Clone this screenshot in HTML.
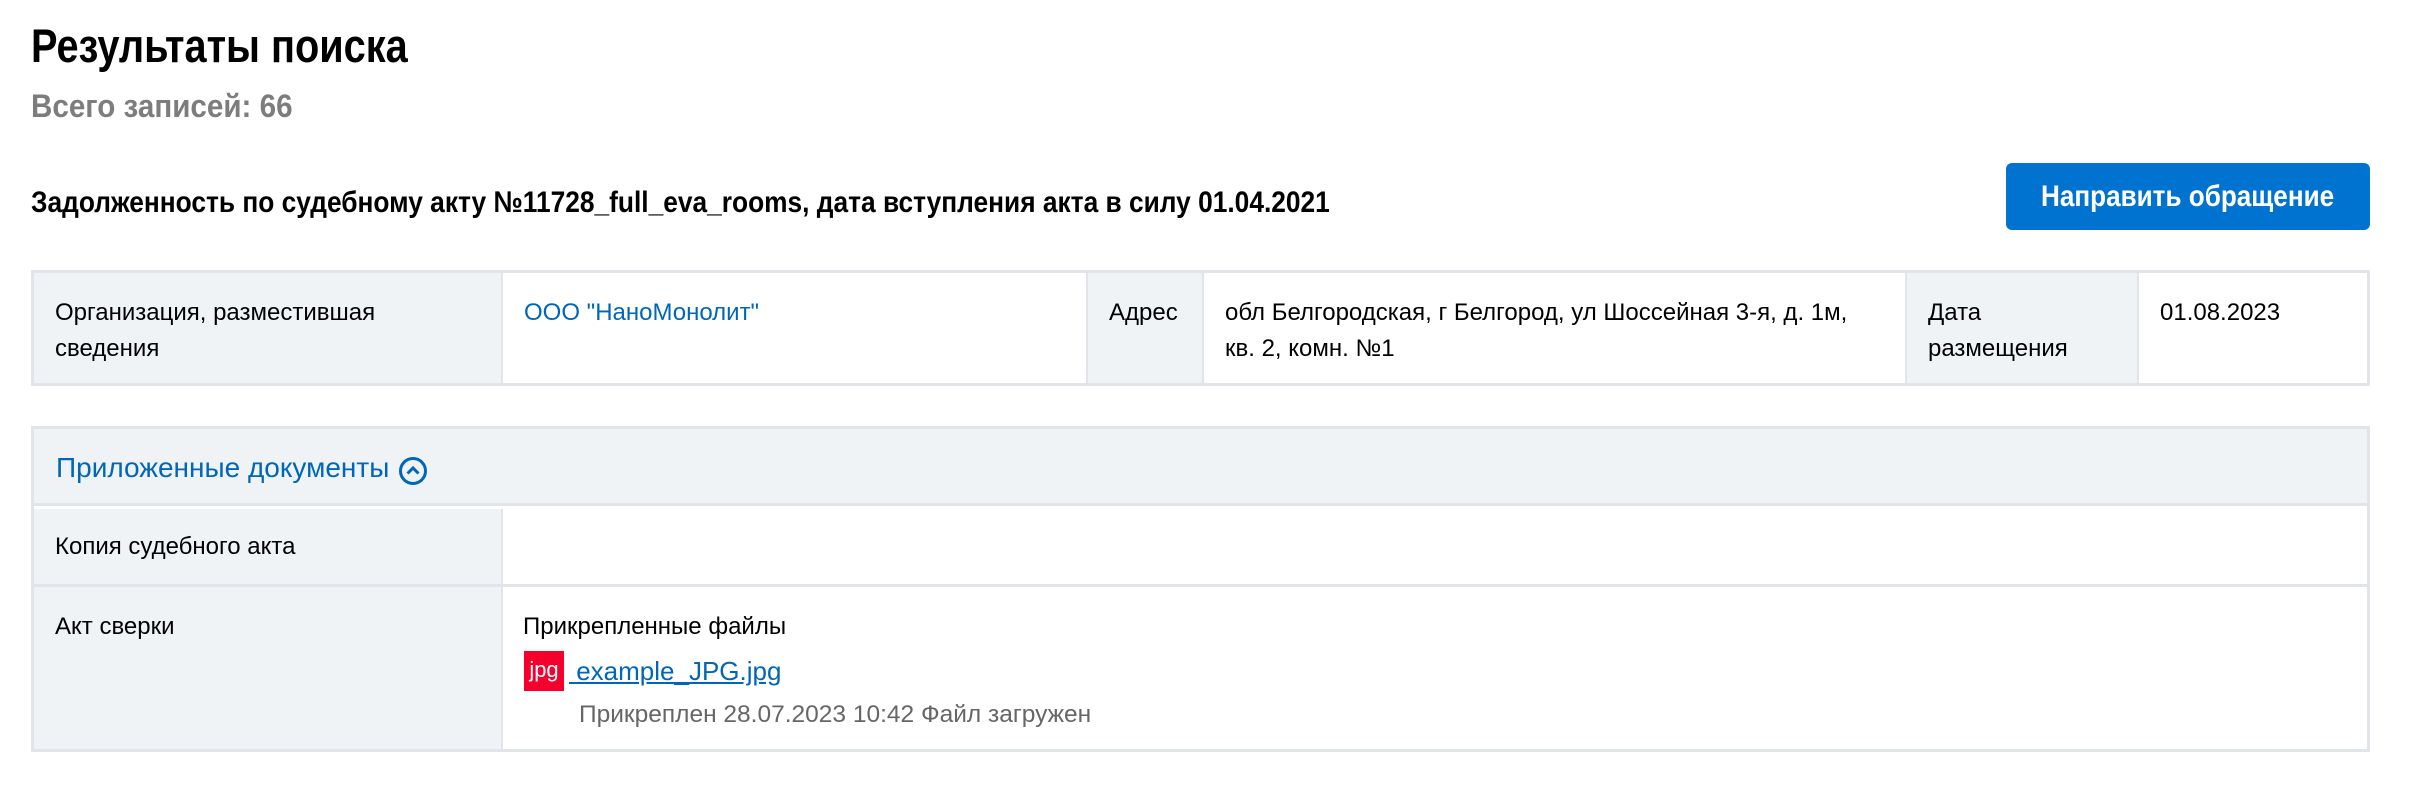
<!DOCTYPE html>
<html><head><meta charset="utf-8"><style>
*{margin:0;padding:0;box-sizing:border-box}
body{width:2410px;height:798px;background:#fff;font-family:"Liberation Sans",sans-serif;color:#000;position:relative;overflow:hidden}
.a{position:absolute;white-space:nowrap}
.sx{transform-origin:0 50%}
.cell{position:absolute;font-size:24px;line-height:36px;padding:22px 0 0 21px}
.lab{background:#eff3f6}
</style></head><body>
<div class="a sx" style="left:31px;top:18px;font-size:47px;line-height:56px;font-weight:bold;transform:scaleX(0.845)">Результаты поиска</div>
<div class="a sx" style="left:31px;top:86px;font-size:32px;line-height:40px;color:#7d7d7d;font-weight:bold;transform:scaleX(0.925)">Всего записей: 66</div>
<div class="a sx" style="left:31px;top:184px;font-size:30px;line-height:38px;font-weight:bold;transform:scaleX(0.877)">Задолженность по судебному акту №11728_full_eva_rooms, дата вступления акта в силу 01.04.2021</div>
<div class="a" style="left:2006px;top:163px;width:364px;height:67px;background:#0073d1;border-radius:6px;"></div>
<div class="a sx" style="left:2041px;top:163px;color:#fff;font-size:30px;line-height:67px;font-weight:bold;transform:scaleX(0.87)">Направить обращение</div>

<div style="position:absolute;left:31px;top:270px;width:2339px;height:116px;border:3px solid #e1e5ea;background:#fff">
  <div class="cell lab" style="left:0;top:0;width:469px;height:110px;border-right:2px solid #e1e5ea">Организация, разместившая<br>сведения</div>
  <div class="cell" style="left:469px;top:0;width:583px;height:110px;color:#0066b8">ООО "НаноМонолит"</div>
  <div class="cell lab" style="left:1052px;top:0;width:118px;height:110px;border-left:2px solid #e1e5ea;border-right:2px solid #e1e5ea">Адрес</div>
  <div class="cell" style="left:1170px;top:0;width:701px;height:110px">обл Белгородская, г Белгород, ул Шоссейная 3-я, д. 1м,<br>кв. 2, комн. №1</div>
  <div class="cell lab" style="left:1871px;top:0;width:234px;height:110px;border-left:2px solid #e1e5ea;border-right:2px solid #e1e5ea">Дата<br>размещения</div>
  <div class="cell" style="left:2105px;top:0;width:228px;height:110px">01.08.2023</div>
</div>

<div style="position:absolute;left:31px;top:426px;width:2339px;height:326px;border:3px solid #e1e5ea;background:#fff;overflow:hidden">
  <div class="lab" style="position:absolute;left:0;top:0;width:2339px;height:77px;border-bottom:3px solid #e1e5ea"></div>
  <div class="a" style="left:22px;top:21px;font-size:28px;line-height:36px;color:#0066b8">Приложенные документы</div>
  <svg class="a" style="left:363px;top:26px" width="32" height="32" viewBox="0 0 32 32"><circle cx="16" cy="16" r="12.5" fill="none" stroke="#0066b8" stroke-width="3"/><path d="M10.5 18.5 L16 13 L21.5 18.5" fill="none" stroke="#0066b8" stroke-width="3"/></svg>
  <div class="cell lab" style="left:0;top:80px;width:469px;height:77px;border-right:2px solid #e1e5ea;padding-top:20px">Копия судебного акта</div>
  <div style="position:absolute;left:0;top:155px;width:2339px;height:3px;background:#e1e5ea"></div>
  <div class="cell lab" style="left:0;top:158px;width:469px;height:165px;border-right:2px solid #e1e5ea;padding-top:22px">Акт сверки</div>
  <div class="a" style="left:489px;top:180px;font-size:24px;line-height:36px">Прикрепленные файлы</div>
  <div class="a" style="left:490px;top:222px;width:40px;height:40px;background:#f5002d;color:#fff;font-size:22px;line-height:38px;text-align:center">jpg</div>
  <div class="a" style="left:535px;top:224px;font-size:26px;line-height:36px;color:#0066b8;text-decoration:underline">&nbsp;example_JPG.jpg</div>
  <div class="a" style="left:545px;top:268px;font-size:24.5px;line-height:36px;color:#666">Прикреплен 28.07.2023 10:42 Файл загружен</div>
</div>
</body></html>
